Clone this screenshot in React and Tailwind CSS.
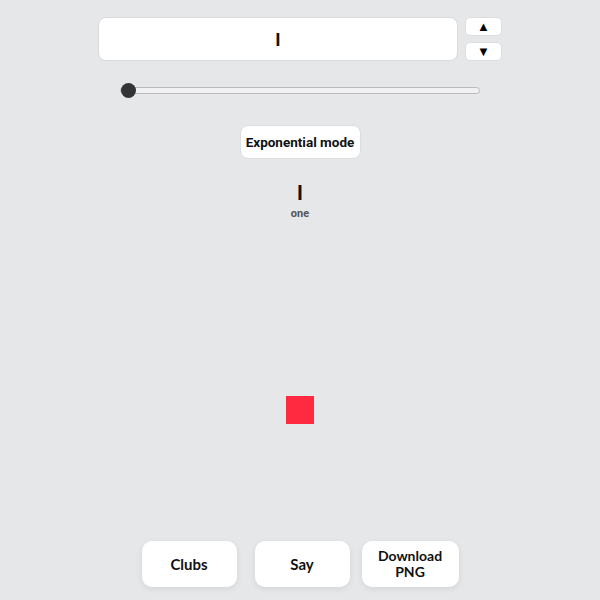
import React from 'react';

function App() {
  const font = { fontFamily: '"Lato", "Liberation Sans", sans-serif' };
  return (
    <div className="w-[600px] h-[600px] bg-[#e6e7e9] flex flex-col items-center font-['Roboto','Liberation_Sans',sans-serif]">
      <div className="flex items-start gap-[7px] mt-[17px]">
        <div className="w-[360px] h-[44px] bg-white rounded-[8px] border border-[#d9dadc] flex items-center justify-center text-[18px] font-bold text-[#111]">
          I
        </div>
        <div className="flex flex-col gap-[6px]">
          <button className="w-[37px] h-[19px] bg-white rounded-[5px] border border-[#dcdde0] flex items-center justify-center text-[13px] leading-none text-black">
            ▲
          </button>
          <button className="w-[37px] h-[19px] bg-white rounded-[5px] border border-[#dcdde0] flex items-center justify-center text-[13px] leading-none text-black">
            ▼
          </button>
        </div>
      </div>

      <div className="relative w-[360px] h-[15px] mt-[22px] flex items-center">
        <div className="w-full h-[7px] rounded-full bg-[#f1f1f2] border border-[#b9babd]"></div>
        <div className="absolute left-[1px] top-0 w-[15px] h-[15px] rounded-full bg-[#333435]"></div>
      </div>

      <button className="mt-[27px] w-[121px] h-[34px] bg-white rounded-[8px] border border-[#dcdde0] text-[13.5px] font-bold text-[#111] whitespace-nowrap">
        Exponential mode
      </button>

      <div className="mt-[24px] text-[20px] font-bold leading-[20px] text-[#111]">I</div>
      <div className="mt-[4px] text-[11px] font-bold leading-[14px] text-[#555]">one</div>

      <div className="mt-[175px] w-[28px] h-[28px] bg-[#ff2a3f]"></div>

      <div className="mt-[117px] flex items-start" style={font}>
        <button className="w-[95px] h-[46px] bg-white rounded-[10px] shadow-[0_2px_6px_rgba(0,0,0,0.08)] text-[15px] font-bold text-[#111]">
          Clubs
        </button>
        <button className="ml-[18px] w-[95px] h-[46px] bg-white rounded-[10px] shadow-[0_2px_6px_rgba(0,0,0,0.08)] text-[15px] font-bold text-[#111]">
          Say
        </button>
        <button className="ml-[12px] w-[97px] h-[46px] bg-white rounded-[10px] shadow-[0_2px_6px_rgba(0,0,0,0.08)] text-[14px] leading-[16px] font-bold text-[#111]">
          Download
          <br />
          PNG
        </button>
      </div>
    </div>
  );
}

export default App;
